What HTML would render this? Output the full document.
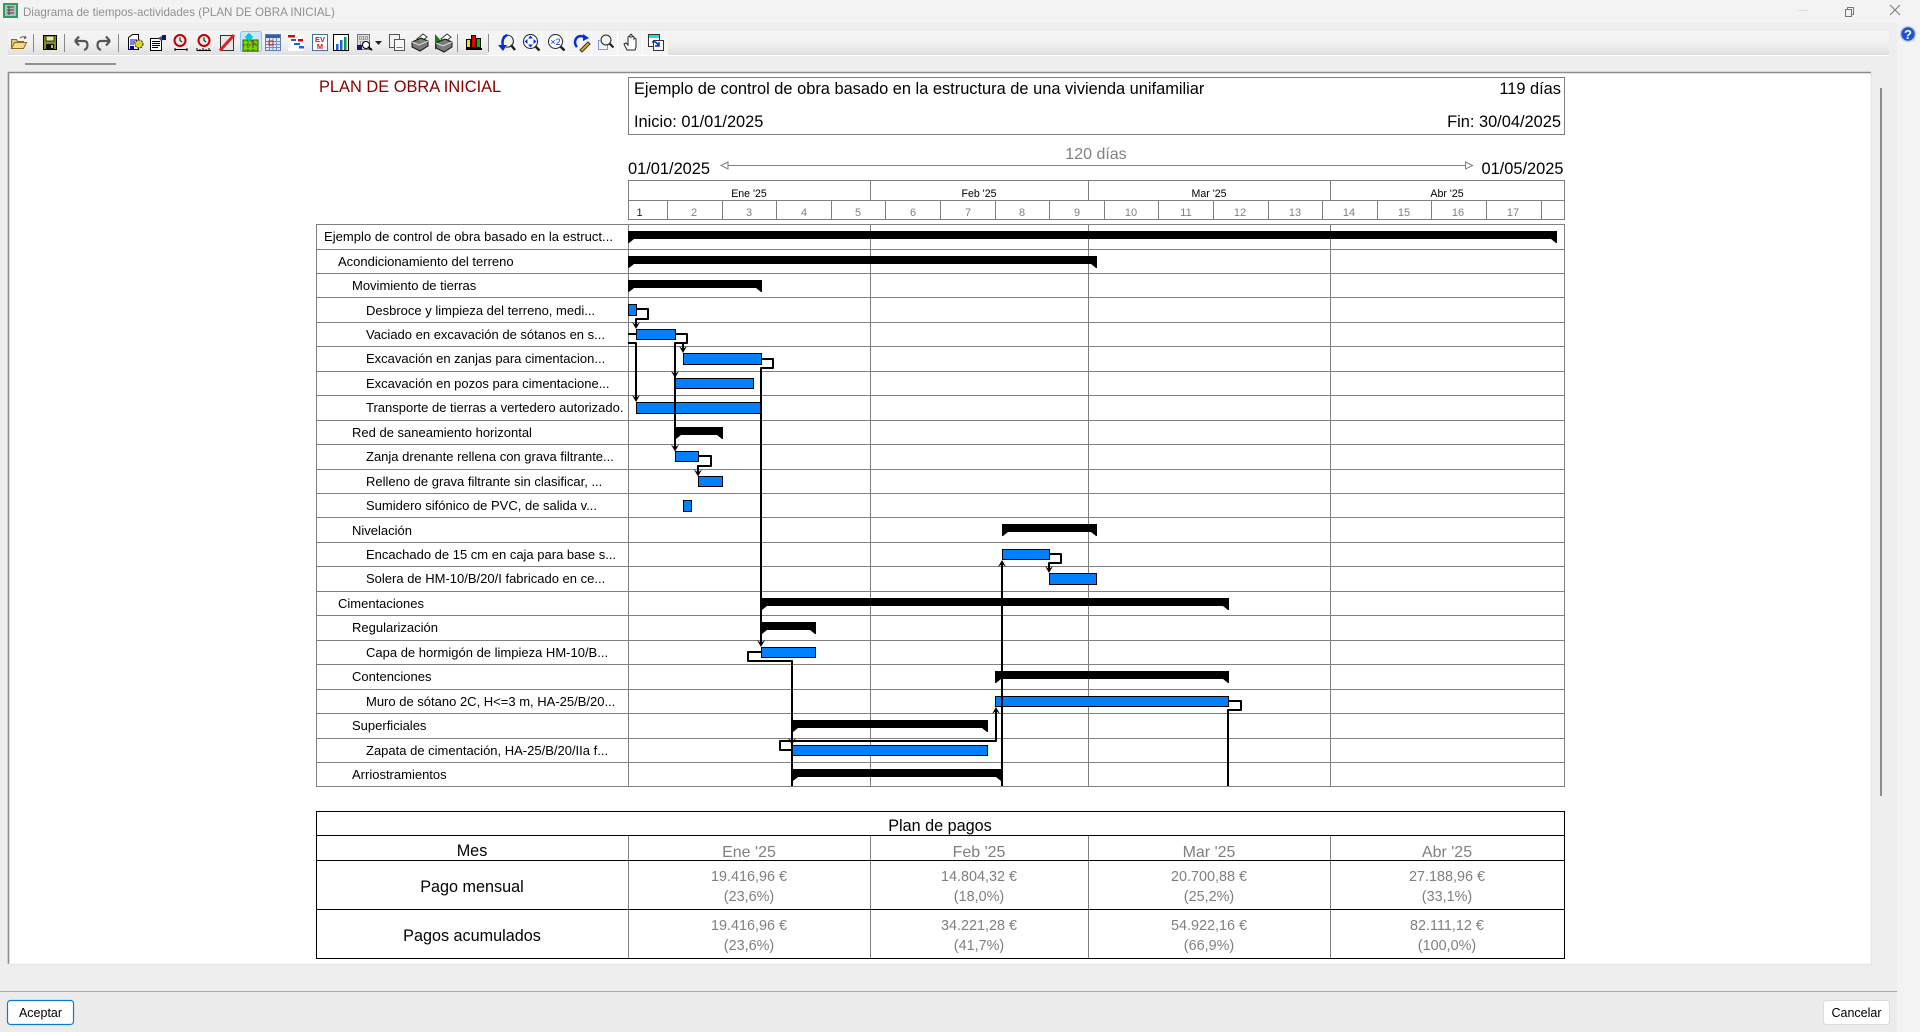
<!DOCTYPE html>
<html lang="es"><head><meta charset="utf-8"><title>Diagrama de tiempos-actividades</title>
<style>
html,body{margin:0;padding:0;width:1920px;height:1032px;overflow:hidden;background:#eeeeee}
svg{display:block;position:absolute;left:0;top:0}
text{font-family:"Liberation Sans",Arial,sans-serif}
.r{font-size:13px;fill:#000}
.w{font-size:11px;fill:#808080;text-anchor:middle}
.m{font-size:10.6px;fill:#000;text-anchor:middle}
.h{font-size:16.4px;fill:#000}
.g{font-size:16px;fill:#808080;text-anchor:middle}
.v{font-size:14.4px;fill:#808080;text-anchor:middle}
.b{font-size:16.2px;fill:#000;text-anchor:middle}
</style></head><body>
<svg width="1920" height="1032" viewBox="0 0 1920 1032" xmlns="http://www.w3.org/2000/svg">
<defs><linearGradient id="tb" x1="0" y1="0" x2="0" y2="1"><stop offset="0" stop-color="#f5f5f5"/><stop offset=".55" stop-color="#f0f0f0"/><stop offset="1" stop-color="#dfdfdf"/></linearGradient></defs>

<!-- window backgrounds -->
<rect x="0" y="0" width="1920" height="1032" fill="#eeeeee"/>
<rect x="0" y="0" width="1920" height="23" fill="#f3f3f3"/>
<rect x="1897" y="23" width="23" height="1009" fill="#f3f3f3"/>
<rect x="0" y="992" width="1897" height="40" fill="#ececec"/>
<rect x="0" y="991" width="1897" height="1" fill="#a8a8a8"/>

<!-- title bar -->
<rect x="3" y="3" width="15" height="15" fill="#2f9e5c"/>
<rect x="5" y="5" width="11" height="11" fill="#b4bdb7"/>
<path d="M7 7h7M7 10h7M7 13h7M9 6v9" stroke="#444" stroke-width="1" fill="none"/>
<text x="23" y="16" font-size="11.6" fill="#8f8f8f">Diagrama de tiempos-actividades (PLAN DE OBRA INICIAL)</text>
<rect x="1798" y="10" width="10" height="1" fill="#dcdcdc"/>
<path d="M1845.5 9.5h6v7h-6zM1847.5 9.5v-2h6v7h-2" fill="none" stroke="#777" stroke-width="1"/>
<path d="M1890 5l10 10M1900 5l-10 10" stroke="#777" stroke-width="1" fill="none"/>

<!-- toolbar -->
<rect x="8" y="31" width="1881" height="24" fill="url(#tb)"/>
<rect x="8" y="55" width="1881" height="1" fill="#ffffff"/>
<rect x="488" y="31" width="180" height="24" fill="#f4f4f4"/>
<path d="M515.500 31v24M541.500 31v24M566.500 31v24M591.500 31v24M617.500 31v24M642.500 31v24" stroke="#fff" stroke-width="1"/>
<path d="M33.500 34v18M64.500 34v18M118.500 34v18M457.500 34v18M488.500 34v18" stroke="#8a8a8a" stroke-width="1"/>
<rect x="25" y="63" width="91" height="2" fill="#909090"/>

<!-- folder -->
<g transform="translate(11,35)"><path d="M0.500 4.500h5l1 2h6v7H0.500z" fill="#e8c56a" stroke="#8a6a1c"/><path d="M0.500 13.500l3-6h12l-3 6z" fill="#f4dc8c" stroke="#8a6a1c"/><path d="M9 3q3-2.500 6 0l-1-2m1 2l-2 .5" stroke="#555" fill="none"/></g>
<!-- save -->
<g transform="translate(43,35)"><rect x=".5" y=".5" width="13" height="14" fill="#8a8a1e" stroke="#000"/><rect x="3" y="1" width="8" height="5" fill="#e8e8a8" stroke="#000" stroke-width=".7"/><rect x="3" y="9" width="8" height="5.500" fill="#111"/><rect x="8" y="10" width="2" height="3" fill="#bbb"/></g>
<!-- undo redo -->
<path d="M75 41l4-4.500M75 41l4 4.500M75 41h9q3.500 0 3.500 4t-3.500 5" fill="none" stroke="#555" stroke-width="2.200"/>
<path d="M110 41l-4-4.500M110 41l-4 4.500M110 41h-9q-3.500 0-3.500 4t3.500 5" fill="none" stroke="#555" stroke-width="2.200"/>
<!-- doc gear -->
<g transform="translate(128,34)"><path d="M.5 3.500l4-3h6v15h-10z" fill="#fff" stroke="#000"/><path d="M2 6h7M2 8h5M2 10h4" stroke="#0000c0" stroke-width="1"/><circle cx="11" cy="10" r="4" fill="#d8d820" stroke="#222" stroke-dasharray="2 1"/><rect x="2" y="12" width="4" height="3" fill="#0000c0"/></g>
<!-- doc sheet -->
<g transform="translate(150,35)"><rect x=".5" y="3.500" width="11" height="12" fill="#fff" stroke="#000"/><path d="M2 6.500h8M2 8.500h8M2 10.500h8M2 12.500h6" stroke="#000"/><path d="M8 3l5-2.500 3 3-5 2.500z" fill="#555"/><rect x="12" y="0" width="4" height="5" fill="#14146e"/></g>
<!-- clock 1 -->
<g transform="translate(173,34)"><circle cx="7" cy="6.500" r="5.500" fill="#e8e8e8" stroke="#c00000" stroke-width="2"/><path d="M7 3.500v3l2 1.500" stroke="#000" fill="none"/><path d="M2 14v3M2 15.500h12M14 14v3" stroke="#000" stroke-width="1" fill="none"/></g>
<!-- clock 2 -->
<g transform="translate(197,34)"><circle cx="7" cy="6.500" r="5.500" fill="#e8e8e8" stroke="#c00000" stroke-width="2"/><path d="M7 3.500v3l2 1.500" stroke="#000" fill="none"/><path d="M0 16.500h14M0 14v3M3 15v2M6 14v3M9 15v2M12 14v3" stroke="#000" stroke-width="1" fill="none"/></g>
<!-- red slash -->
<g transform="translate(220,35)"><rect x=".5" y=".5" width="13" height="15" fill="#e8e8e8" stroke="#333"/><path d="M0 15.500L14 0" stroke="#e02020" stroke-width="3"/></g>
<!-- highlighted -->
<rect x="240.500" y="31.500" width="21" height="20" rx="2" fill="#cfe6f8" stroke="#8fc4ee"/>
<g transform="translate(243,35)"><rect x="0" y="5" width="15" height="11" fill="#7fd000" stroke="#2a5a00"/><path d="M0 10h15M5 5v11M10 5v11" stroke="#2a5a00" stroke-dasharray="2 1"/><rect x="3" y="-1" width="6" height="6" fill="#00c8d8" transform="rotate(45 6 2)"/><path d="M8 6l5 4" stroke="#666" stroke-width="2"/></g>
<!-- calendar -->
<g transform="translate(265,34)"><rect x=".5" y=".5" width="15" height="16" fill="#dfe8f6" stroke="#5f7fae"/><rect x="1" y="1" width="14" height="3" fill="#2f5fb0"/><path d="M1 7.500h14M1 10.500h14M1 13.500h14M4.500 4v12M8 4v12M11.500 4v12" stroke="#6f8fc0" stroke-width="1"/><rect x="4" y="7" width="4" height="4" fill="none" stroke="#d02020"/></g>
<!-- gantt -->
<g transform="translate(288,34)"><rect x="0" y="0" width="16" height="17" fill="#fff"/><rect x="0" y="1" width="7" height="2.500" fill="#e00000"/><rect x="3" y="5" width="5" height="2" fill="#2060e0"/><rect x="10" y="5" width="5" height="2.500" fill="#e00000"/><rect x="6" y="9" width="6" height="2" fill="#2060e0"/><rect x="11" y="12" width="5" height="2.500" fill="#2060e0"/></g>
<!-- EVM -->
<g transform="translate(312,34)"><rect x=".5" y=".5" width="15" height="16" fill="#fff" stroke="#3f6f9f"/><text x="8" y="8" font-size="7.500" font-weight="bold" fill="#e01010" text-anchor="middle">EV</text><text x="8" y="15" font-size="7.500" font-weight="bold" fill="#e01010" text-anchor="middle">M</text></g>
<!-- chart -->
<g transform="translate(333,34)"><rect x=".5" y=".5" width="15" height="16" fill="#fff" stroke="#000"/><rect x="3" y="10" width="2.500" height="6" fill="#2060e0"/><rect x="7" y="6" width="2.500" height="10" fill="#2060e0"/><rect x="11" y="3" width="2.500" height="13" fill="#00a040"/></g>
<!-- doc list -->
<g transform="translate(357,34)"><rect x=".5" y=".5" width="12" height="15" fill="#e0e0e0" stroke="#777"/><text x="6.500" y="6" font-size="5.500" fill="#555" text-anchor="middle">010</text><text x="6.500" y="11" font-size="5.500" fill="#555" text-anchor="middle">101</text><rect x="0" y="11" width="5" height="5" fill="#14146e"/><circle cx="9" cy="11" r="3.500" fill="#fff" stroke="#000"/><path d="M11 13l4 3" stroke="#000" stroke-width="2"/></g>
<path d="M375 41h7l-3.500 4z" fill="#222"/>
<!-- copy -->
<g transform="translate(389,34)"><rect x=".5" y=".5" width="10" height="13" fill="#f2f2f2" stroke="#555"/><rect x="5.500" y="5.500" width="10" height="11" fill="#f8f8f8" stroke="#555"/><path d="M7.500 13.500h6" stroke="#777"/></g>
<!-- printers -->
<g transform="translate(412,34)"><path d="M5 5l6-5 4 3-6 5z" fill="#fff" stroke="#333"/><path d="M0 8l9-4 7 3v5l-8 5-8-4z" fill="#7a7a7a" stroke="#111"/><path d="M0 8l7 3 9-4" fill="none" stroke="#ddd"/><rect x="4" y="7" width="3" height="1.500" fill="#d05050"/><rect x="8" y="6" width="3" height="1.500" fill="#50b050"/></g>
<g transform="translate(435,34)"><path d="M0 0l7 8-7 8z" fill="#108010"/><path d="M6 5l6-5 4 3-6 5z" fill="#fff" stroke="#333"/><path d="M1 9l9-4 7 3v5l-8 5-8-4z" fill="#7a7a7a" stroke="#111"/><path d="M1 9l7 3 9-4" fill="none" stroke="#ddd"/></g>
<!-- color bars -->
<g transform="translate(466,35)"><rect x=".5" y="4.500" width="4" height="8" fill="#e8e800" stroke="#000"/><rect x="5.500" y=".5" width="4" height="12" fill="#e00000" stroke="#000"/><rect x="10.500" y="3.500" width="4" height="9" fill="#00c000" stroke="#000"/><rect x="0" y="13" width="16" height="2" fill="#000"/></g>
<!-- zoom icons -->
<g transform="translate(498,34)"><path d="M5 3a6 6 0 1 1 3 10" fill="none" stroke="#222"/><path d="M13 11l4 5" stroke="#222" stroke-width="2.500"/><path d="M9 1q-6 3-4 12" fill="none" stroke="#0030e0" stroke-width="2.500"/><path d="M0 11l5 6 4-6z" fill="#0030e0"/></g>
<g transform="translate(523,34)"><circle cx="7.500" cy="7.500" r="7" fill="#fff" stroke="#222"/><path d="M12.500 12.500l4 4" stroke="#222" stroke-width="2.500"/><path d="M7.500 1.500l2.500 3h-5zM7.500 13.500l2.500-3h-5zM1.500 7.500l3-2.500v5zM13.500 7.500l-3-2.500v5z" fill="#0030e0"/></g>
<g transform="translate(548,34)"><circle cx="7.500" cy="7.500" r="7" fill="#fff" stroke="#222"/><path d="M12.500 12.500l4 4" stroke="#222" stroke-width="2.500"/><text x="7.500" y="11" font-size="9" fill="#0030e0" text-anchor="middle">×2</text></g>
<g transform="translate(573,34)"><path d="M12 3q-9-3-10 5 0 3 2 5" fill="none" stroke="#0030e0" stroke-width="2.500"/><path d="M10 0l6 4-6 3z" fill="#0030e0"/><path d="M7 16l8-8 2 2-8 8z" fill="#e8b020" stroke="#333"/></g>
<g transform="translate(598,34)"><rect x=".5" y="6.500" width="9" height="9" fill="none" stroke="#0030e0" stroke-dasharray="1 1"/><circle cx="8" cy="6" r="5" fill="#f4f4f4" stroke="#222"/><path d="M11.500 9.500l4 4" stroke="#222" stroke-width="2.200"/></g>
<g transform="translate(624,34)"><path d="M3 16l-3-6 2-1 2 2V3q1-1.500 2 0v-2q1-1.500 2 0v2q1-1.500 2 0v2q1-1.500 2 0v8l-1 3z" fill="#fff" stroke="#222"/></g>
<g transform="translate(648,34)"><rect x=".5" y=".5" width="11" height="12" fill="#fff" stroke="#333"/><rect x="1" y="1" width="10" height="3" fill="#20d8e8"/><rect x="5.500" y="6.500" width="10" height="10" fill="#fff" stroke="#333"/><path d="M4 8q4-1 6 3M11 8v4H7" fill="none" stroke="#0030c0" stroke-width="1.500"/></g>

<!-- help -->
<circle cx="1908" cy="34" r="7.500" fill="#1f55d0" stroke="#c8d0e0" stroke-width="1.500"/>
<text x="1908" y="39" font-size="13" font-weight="bold" fill="#fff" text-anchor="middle">?</text>

<!-- panel -->
<rect x="9" y="73" width="1862" height="891" fill="#ffffff"/>
<path d="M8.500 964V72.500H1871" fill="none" stroke="#8c8c8c" stroke-width="1.600"/>
<path d="M1871.500 73V964.500H8" fill="none" stroke="#e6e6e6" stroke-width="1.500"/>
<rect x="1880" y="88" width="2" height="708" fill="#8c8c8c"/>

<!-- header -->
<text x="319" y="92" class="h" style="fill:#8b0000">PLAN DE OBRA INICIAL</text>
<rect x="628.500" y="77.500" width="936" height="57" fill="none" stroke="#808080"/>
<text x="634" y="94" class="h">Ejemplo de control de obra basado en la estructura de una vivienda unifamiliar</text>
<text x="1561" y="94" class="h" text-anchor="end">119 días</text>
<text x="634" y="127" class="h">Inicio: 01/01/2025</text>
<text x="1561" y="127" class="h" text-anchor="end">Fin: 30/04/2025</text>
<text x="628" y="174" class="h">01/01/2025</text>
<text x="1563.500" y="174" class="h" text-anchor="end">01/05/2025</text>
<text x="1096" y="159" class="g">120 días</text>
<path d="M728 165.500H1465" stroke="#808080" fill="none"/>
<path d="M728 162l-7 3.500 7 3.500zM1465.500 162l7 3.500-7 3.500z" fill="#fff" stroke="#808080"/>

<!-- timeline -->
<g fill="none" stroke="#808080" shape-rendering="crispEdges">
<rect x="628.500" y="180.500" width="936" height="39"/>
<path d="M628 200.500H1565M870.500 180v20M1088.500 180v20M1330.500 180v20"/>
<path d="M667.500 200v19M722.500 200v19M776.500 200v19M831.500 200v19M885.500 200v19M940.500 200v19M995.500 200v19M1049.500 200v19M1104.500 200v19M1158.500 200v19M1213.500 200v19M1268.500 200v19M1322.500 200v19M1377.500 200v19M1431.500 200v19M1486.500 200v19M1541.500 200v19"/>
</g>
<text x="749" y="197" class="m">Ene '25</text><text x="979" y="197" class="m">Feb '25</text><text x="1209" y="197" class="m">Mar '25</text><text x="1447" y="197" class="m">Abr '25</text>
<text x="639.500" y="216" class="w" style="fill:#222">1</text><text x="694" y="216" class="w">2</text><text x="749" y="216" class="w">3</text><text x="804" y="216" class="w">4</text><text x="858" y="216" class="w">5</text><text x="913" y="216" class="w">6</text><text x="968" y="216" class="w">7</text><text x="1022" y="216" class="w">8</text><text x="1077" y="216" class="w">9</text><text x="1131" y="216" class="w">10</text><text x="1186" y="216" class="w">11</text><text x="1240" y="216" class="w">12</text><text x="1295" y="216" class="w">13</text><text x="1349" y="216" class="w">14</text><text x="1404" y="216" class="w">15</text><text x="1458" y="216" class="w">16</text><text x="1513" y="216" class="w">17</text>

<!-- gantt grid -->
<g fill="none" stroke="#808080" shape-rendering="crispEdges">
<rect x="316.500" y="224.500" width="1248" height="562"/>
<path d="M628.500 224v562M870.500 224v562M1088.500 224v562M1330.500 224v562"/>
<path d="M316 249.500H1565M316 273.500H1565M316 297.500H1565M316 322.500H1565M316 346.500H1565M316 371.500H1565M316 395.500H1565M316 420.500H1565M316 444.500H1565M316 469.500H1565M316 493.500H1565M316 517.500H1565M316 542.500H1565M316 566.500H1565M316 591.500H1565M316 615.500H1565M316 640.500H1565M316 664.500H1565M316 689.500H1565M316 713.500H1565M316 738.500H1565M316 762.500H1565"/>
</g>

<!-- row labels -->
<text x="324" y="241" class="r" textLength="289" lengthAdjust="spacing">Ejemplo de control de obra basado en la estruct...</text>
<text x="338" y="266" class="r">Acondicionamiento del terreno</text>
<text x="352" y="290" class="r">Movimiento de tierras</text>
<text x="366" y="315" class="r">Desbroce y limpieza del terreno, medi...</text>
<text x="366" y="339" class="r">Vaciado en excavación de sótanos en s...</text>
<text x="366" y="363" class="r">Excavación en zanjas para cimentacion...</text>
<text x="366" y="388" class="r">Excavación en pozos para cimentacione...</text>
<text x="366" y="412" class="r">Transporte de tierras a vertedero autorizado.</text>
<text x="352" y="437" class="r">Red de saneamiento horizontal</text>
<text x="366" y="461" class="r">Zanja drenante rellena con grava filtrante...</text>
<text x="366" y="486" class="r">Relleno de grava filtrante sin clasificar, ...</text>
<text x="366" y="510" class="r">Sumidero sifónico de PVC, de salida v...</text>
<text x="352" y="535" class="r">Nivelación</text>
<text x="366" y="559" class="r">Encachado de 15 cm en caja para base s...</text>
<text x="366" y="583" class="r">Solera de HM-10/B/20/I fabricado en ce...</text>
<text x="338" y="608" class="r">Cimentaciones</text>
<text x="352" y="632" class="r">Regularización</text>
<text x="366" y="657" class="r">Capa de hormigón de limpieza HM-10/B...</text>
<text x="352" y="681" class="r">Contenciones</text>
<text x="366" y="706" class="r">Muro de sótano 2C, H&lt;=3 m, HA-25/B/20...</text>
<text x="352" y="730" class="r">Superficiales</text>
<text x="366" y="755" class="r">Zapata de cimentación, HA-25/B/20/IIa f...</text>
<text x="352" y="779" class="r">Arriostramientos</text>

<!-- summary bars -->
<g fill="#000">
<path d="M628 231H1557V243H1556L1551 239H634L629 243H628Z"/>
<path d="M628 256H1097V268H1096L1091 264H634L629 268H628Z"/>
<path d="M628 280H762V292H761L756 288H634L629 292H628Z"/>
<path d="M675 427H723V439H722L717 435H681L676 439H675Z"/>
<path d="M1002 524H1097V536H1096L1091 532H1008L1003 536H1002Z"/>
<path d="M761 598H1229V610H1228L1223 606H767L762 610H761Z"/>
<path d="M761 622H816V634H815L810 630H767L762 634H761Z"/>
<path d="M995 671H1229V683H1228L1223 679H1001L996 683H995Z"/>
<path d="M792 720H988V732H987L982 728H798L793 732H792Z"/>
<path d="M792 769H1002V781H1001L996 777H798L793 781H792Z"/>
</g>
<!-- task bars -->
<g fill="#0080ff" stroke="#000" shape-rendering="crispEdges">
<rect x="628.500" y="304.500" width="8" height="11"/>
<rect x="636.500" y="329.500" width="39" height="10"/>
<rect x="683.500" y="353.500" width="78" height="11"/>
<rect x="675.500" y="378.500" width="78" height="10"/>
<rect x="636.500" y="402.500" width="124" height="11"/>
<rect x="675.500" y="451.500" width="23" height="10"/>
<rect x="698.500" y="476.500" width="24" height="10"/>
<rect x="683.500" y="500.500" width="8" height="11"/>
<rect x="1002.500" y="549.500" width="47" height="10"/>
<rect x="1049.500" y="573.500" width="47" height="11"/>
<rect x="761.500" y="647.500" width="54" height="10"/>
<rect x="995.500" y="696.500" width="233" height="10"/>
<rect x="791.500" y="745.500" width="196" height="10"/>
</g>
<!-- links -->
<g fill="none" stroke="#000" stroke-width="2" stroke-linejoin="round">
<path d="M637 309H648V319H636V326"/>
<path d="M628 334H637"/>
<path d="M628 343H636V399"/>
<path d="M676 334H687V343H683V350"/>
<path d="M687 343H675V449"/>
<path d="M762 359H773V368H761V645"/>
<path d="M699 456H711V466H698V474"/>
<path d="M1050 554H1061V563H1049V570"/>
<path d="M1002 786V563"/>
<path d="M761 652H748V661H792V786"/>
<path d="M792 750H780V741H996V710"/>
<path d="M1229 701H1241V710H1228V786"/>
</g>
<g fill="#000">
<path d="M632 322L636 325 640 322 636 329Z"/>
<path d="M632 395L636 398 640 395 636 402Z"/>
<path d="M679 346L683 349 687 346 683 353Z"/>
<path d="M671 371L675 374 679 371 675 378Z"/>
<path d="M671 444.500L675 447.500 679 444.500 675 451.500Z"/>
<path d="M757 640L761 643 765 640 761 647Z"/>
<path d="M694 469.500L698 472.500 702 469.500 698 476.500Z"/>
<path d="M1045 566L1049 569 1053 566 1049 573Z"/>
<path d="M788 738L792 741 796 738 792 745Z"/>
<path d="M998 567L1002 564 1006 567 1002 560Z"/>
<path d="M992 714L996 711 1000 714 996 707Z"/>
</g>

<!-- payment table -->
<g fill="none" stroke="#808080" shape-rendering="crispEdges"><path d="M628.500 835v123M870.500 835v123M1088.500 835v123M1330.500 835v123"/></g>
<g fill="none" stroke="#000" shape-rendering="crispEdges"><rect x="316.500" y="811.500" width="1248" height="147"/><path d="M316 835.500H1565M316 860.500H1565M316 909.500H1565"/></g>
<text x="940" y="831" class="b">Plan de pagos</text>
<text x="472" y="856" class="b">Mes</text>
<text x="749" y="857" class="g">Ene '25</text><text x="979" y="857" class="g">Feb '25</text><text x="1209" y="857" class="g">Mar '25</text><text x="1447" y="857" class="g">Abr '25</text>
<text x="472" y="892" class="b">Pago mensual</text>
<text x="472" y="941" class="b">Pagos acumulados</text>
<text x="749" y="881" class="v">19.416,96 €</text><text x="979" y="881" class="v">14.804,32 €</text><text x="1209" y="881" class="v">20.700,88 €</text><text x="1447" y="881" class="v">27.188,96 €</text>
<text x="749" y="901" class="v">(23,6%)</text><text x="979" y="901" class="v">(18,0%)</text><text x="1209" y="901" class="v">(25,2%)</text><text x="1447" y="901" class="v">(33,1%)</text>
<text x="749" y="930" class="v">19.416,96 €</text><text x="979" y="930" class="v">34.221,28 €</text><text x="1209" y="930" class="v">54.922,16 €</text><text x="1447" y="930" class="v">82.111,12 €</text>
<text x="749" y="950" class="v">(23,6%)</text><text x="979" y="950" class="v">(41,7%)</text><text x="1209" y="950" class="v">(66,9%)</text><text x="1447" y="950" class="v">(100,0%)</text>

<!-- buttons -->
<rect x="7.500" y="1000.500" width="66" height="24" rx="3" fill="#ffffff" stroke="#0f78d4" stroke-width="1.200"/>
<text x="40.500" y="1017" font-size="12.500" fill="#000" text-anchor="middle">Aceptar</text>
<rect x="1823.500" y="1000.500" width="66" height="24" rx="3" fill="#ffffff" stroke="#dcdcdc"/>
<text x="1856.500" y="1017" font-size="12.500" fill="#000" text-anchor="middle">Cancelar</text>
</svg>
</body></html>
